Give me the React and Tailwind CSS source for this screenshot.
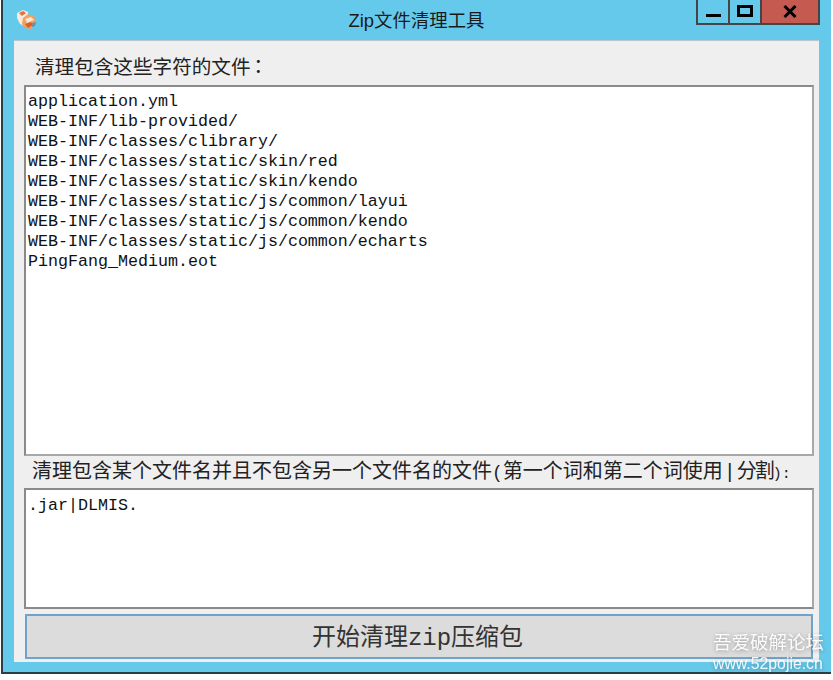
const lines = [
  "application.yml",
  "WEB-INF/lib-provided/",
  "WEB-INF/classes/clibrary/",
  "WEB-INF/classes/static/skin/red",
  "WEB-INF/classes/static/skin/kendo",
  "WEB-INF/classes/static/js/common/layui",
  "WEB-INF/classes/static/js/common/kendo",
  "WEB-INF/classes/static/js/common/echarts",
  "PingFang_Medium.eot",
];

function AppIcon() {
  return (
    <svg width="21" height="21" viewBox="0 0 21 21" className="shrink-0 blur-[0.5px]">
      <path d="M1 4 L7 1 L12 3 L12 8 L8 10 L8 17 L4 15 L1 9 Z" fill="#fbe9dc" />
      <path d="M3 4 L7 2 L10 4 L6 7 Z" fill="#e8703a" />
      <path d="M7 9 L12 5 L19 8 L20 14 L15 20 L9 19 L6 15 Z" fill="#f0a060" />
      <path d="M9 10 L15 8 L18 11 L11 14 Z" fill="#fae6d4" />
      <path d="M9 15 L15 13 L17 16 L12 19 Z" fill="#d9602a" />
      <path d="M16 14 L20 13 L19 17 L16 18 Z" fill="#6f8fa8" />
    </svg>
  );
}

export default function App() {
  return (
    <div className="relative w-[833px] h-[680px] bg-white overflow-hidden font-['Liberation_Sans','Noto_Sans_CJK_SC',sans-serif]">
      <div className="ml-px w-[830px] h-[674px] bg-[#65c9ec] border-l-2 border-b-2 border-[#2b3d47] flex flex-col">
        <div className="h-[40px] shrink-0 flex items-start">
          <div className="ml-[13px] mt-[9px]">
            <AppIcon />
          </div>
          <div className="flex-1 pl-[100px] pt-[8px] text-center text-[18.4px] leading-[25px] text-[#1a1a1a]">
            Zip文件清理工具
          </div>
          <div className="mr-[11px] flex h-[25px] border-2 border-t-0 border-[#454545]">
            <div className="w-[32px] border-r-2 border-[#454545] flex items-end justify-center pb-[6px]">
              <div className="w-[15px] h-[3px] bg-black" />
            </div>
            <div className="w-[32px] border-r-2 border-[#454545] flex items-start justify-center pt-[5px]">
              <div className="w-[16px] h-[12px] border-[3px] border-black" />
            </div>
            <div className="w-[56px] bg-[#c45a50] flex items-center justify-center">
              <svg width="14" height="13" viewBox="0 0 14 13">
                <path d="M1.5 1 L12.5 12 M12.5 1 L1.5 12" stroke="#000" strokeWidth="3" fill="none" />
              </svg>
            </div>
          </div>
        </div>
        <div className="ml-[11px] w-[805px] h-[622px] bg-[#efefef] border-t border-[#b9c6cc] flex flex-col pl-[10px] pr-[5px]">
          <div className="pl-[11px] h-[44px] pt-[13px] text-[19.6px] leading-[24px] text-[#222] whitespace-nowrap">
            清理包含这些字符的文件<span className="font-['Noto_Sans_CJK_TC',sans-serif] -ml-[2px]">：</span>
          </div>
          <div className="h-[371px] bg-white border-2 border-[#8a8a8a] border-r-[#a8a8a8] border-b-[#a8a8a8] pl-[2px] pt-[5px] text-[16.67px] leading-[20px] text-[#111] font-['Liberation_Mono',monospace]">
            {lines.map((l) => (
              <div key={l} className="whitespace-pre">{l}</div>
            ))}
          </div>
          <div className="pl-[8px] h-[32px] pt-[1px] text-[20px] leading-[28px] text-[#222] whitespace-nowrap">
            清理包含某个文件名并且不包含另一个文件名的文件
            <span className="text-[18px] font-['Liberation_Mono',monospace]">(</span>
            第一个词和第二个词使用
            <span className="mx-px font-['Liberation_Mono',monospace]">|</span>
            <span className="tracking-[-2px]">分割</span>
            <span className="text-[15px] font-['Liberation_Mono',monospace]">):</span>
          </div>
          <div className="h-[121px] bg-white border-2 border-[#8a8a8a] border-r-[#a8a8a8] pl-[2px] pt-[6px] text-[16.67px] leading-[20px] text-[#111] font-['Liberation_Mono',monospace]">
            .jar|DLMIS.
          </div>
          <div className="mt-[5px] ml-px w-[788px] h-[45px] bg-[#dcdcdc] border-2 border-[#6ea3cb] flex items-center justify-center pt-[4px] pr-[3px] text-[24px] text-[#333] font-['Liberation_Mono','Noto_Sans_CJK_SC',monospace]">
            开始清理zip压缩包
          </div>
        </div>
      </div>
      <div className="absolute left-[713px] top-[632px] text-white text-[18.5px] leading-[22px] whitespace-nowrap drop-shadow-[0_1px_2px_rgba(0,0,0,0.35)] opacity-90">
        吾爱破解论坛
      </div>
      <div className="absolute left-[713px] top-[654px] text-white text-[15.8px] leading-[20px] whitespace-nowrap drop-shadow-[0_1px_2px_rgba(0,0,0,0.35)] opacity-90">
        www.52pojie.cn
      </div>
    </div>
  );
}
